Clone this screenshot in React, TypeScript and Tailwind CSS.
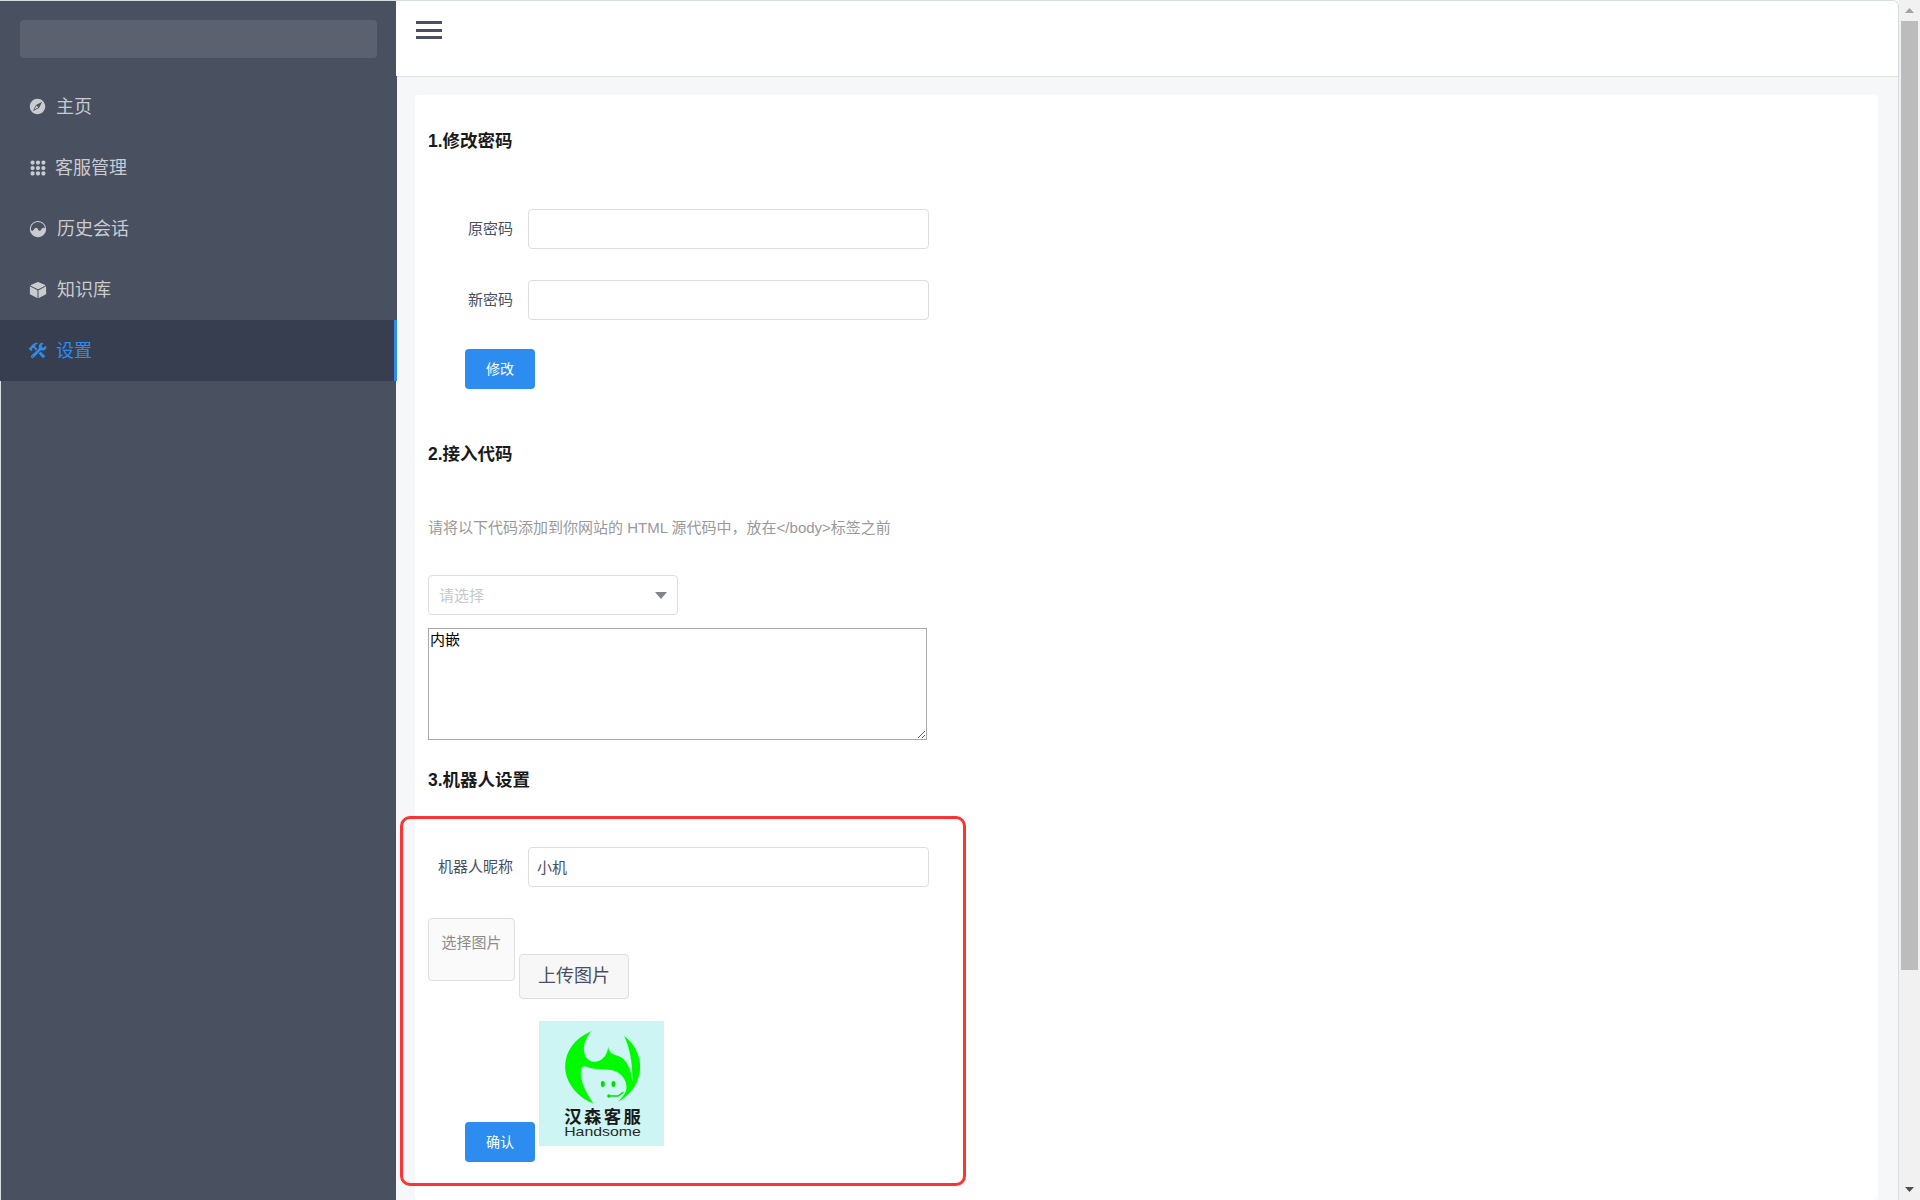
import { IoIosCompass, IoIosKeypad, IoIosAnalytics, IoIosCube, IoIosConstruct } from "react-icons/io";

const menu = [
  { label: "主页", Icon: IoIosCompass, size: "text-[19px]", gap: "ml-[10px]" },
  { label: "客服管理", Icon: IoIosKeypad, size: "text-[20px]", gap: "ml-[9px]" },
  { label: "历史会话", Icon: IoIosAnalytics, size: "text-[20px]", gap: "ml-[11px]" },
  { label: "知识库", Icon: IoIosCube, size: "text-[20px]", gap: "ml-[11px]" },
  { label: "设置", Icon: IoIosConstruct, size: "text-[19px]", gap: "ml-[10px]", active: true },
];

function Field({ label, value, className }: { label: string; value?: string; className?: string }) {
  return (
    <div className={`flex items-center ${className ?? ""}`}>
      <label className="w-[100px] pr-[15px] text-right text-[15px] text-[#495060]">{label}</label>
      <input
        readOnly
        value={value ?? ""}
        className="h-[40px] w-[401px] rounded-[4px] border border-[#dddee1] bg-white px-[8px] pb-[2px] text-[15px] text-[#495060] outline-none"
      />
    </div>
  );
}

function PrimaryButton({ children, className }: { children: string; className?: string }) {
  return (
    <button className={`flex h-[40px] w-[70px] shrink-0 items-center justify-center rounded-[4px] bg-[#2d8cf0] text-[14px] text-white ${className ?? ""}`}>
      {children}
    </button>
  );
}

function Heading({ children, className }: { children: string; className?: string }) {
  return <h2 className={`h-[24px] text-[17.5px] leading-[24px] font-bold text-[#1a1a1a] ${className ?? ""}`}>{children}</h2>;
}

function Logo() {
  return (
    <svg viewBox="27 33 370 375" className="mb-[16px] block h-[125px] w-[125px] shrink-0 bg-[#ccf5f3]">
      <path
        fill="#00fa00"
        d="M183 63 C130 85 103 125 103 170 C103 220 145 265 187 280 C165 245 148 215 150 185 C150 172 155 165 168 170 C195 183 230 172 258 185 C278 197 288 215 287 235 C285 250 275 262 262 275 C300 255 328 215 328 170 C328 135 310 100 280 78 C295 110 305 150 305 215 C300 170 285 145 260 137 C245 132 235 130 232 110 C230 130 220 150 195 155 C170 158 155 135 160 105 C165 85 175 70 183 63 Z"
      />
      <ellipse cx="216" cy="222" rx="6" ry="9" fill="#00e000" />
      <ellipse cx="248" cy="222" rx="6" ry="9" fill="#00e000" />
      <circle cx="234" cy="258" r="5" fill="#00e000" />
      <path d="M234 258 H262 L278 246" stroke="#00e000" strokeWidth="4" fill="none" />
      <text x="215" y="340" textAnchor="middle" textLength="230" className="fill-[#1a1a1a] text-[52px] font-bold">
        汉森客服
      </text>
      <text x="215" y="378" textAnchor="middle" textLength="230" lengthAdjust="spacingAndGlyphs" className="fill-[#2a2a2a] text-[38px]">
        Handsome
      </text>
    </svg>
  );
}

export default function App() {
  return (
    <div className="relative flex h-[1200px] w-[1920px] overflow-hidden bg-white font-['Liberation_Sans','Noto_Sans_CJK_SC',sans-serif]">
      <div className="flex min-w-0 flex-1 rounded-tr-[6px] border-t border-r border-[#d7dde4] bg-[#f5f7f9]">
        {/* Sidebar */}
        <aside className="relative z-10 flex w-[396px] shrink-0 flex-col bg-[#d7dde4]">
          <div className="w-[396px] bg-[#495060] px-[20px] pt-[19px] pb-[18px]">
            <div className="h-[38px] w-[357px] rounded-[4px] bg-[#5b616f]" />
          </div>
          <nav className="w-[397px] bg-[#495060]">
            {menu.map(({ label, Icon, size, gap, active }) => (
              <div
                key={label}
                className={`flex h-[61px] items-center pl-[29px] text-[18px] ${active ? "border-r-[3px] border-[#2d8cf0] bg-[#363e4f] text-[#2d8cf0]" : "text-[#c9cbcf]"}`}
              >
                <span className={`flex w-[17px] items-center justify-center ${size}`}>
                  <Icon className="shrink-0" />
                </span>
                <span className={`${gap} pt-[2px]`}>{label}</span>
              </div>
            ))}
          </nav>
          <div className="ml-[1px] flex-1 bg-[#495060]" />
        </aside>

        {/* Main */}
        <div className="flex min-w-0 flex-1 flex-col">
          <header className="h-[75px] shrink-0 rounded-tr-[6px] bg-white pt-[20px] pl-[20px] shadow-[0_1px_1px_rgba(0,0,0,0.1)]">
            <div className="flex h-[18px] w-[26px] flex-col justify-between">
              <div className="h-[3px] bg-[#495060]" />
              <div className="h-[3px] bg-[#495060]" />
              <div className="h-[3px] bg-[#495060]" />
            </div>
          </header>
          <main className="min-h-0 flex-1 pt-[19px] pr-[20px] pl-[19px]">
            <section className="h-full rounded-[4px] bg-white pt-[34px] pl-[13px]">
              <Heading>1.修改密码</Heading>
              <Field label="原密码" className="mt-[56px]" />
              <Field label="新密码" className="mt-[31px]" />
              <PrimaryButton className="mt-[29px] ml-[37px]">修改</PrimaryButton>

              <Heading className="mt-[53px]">2.接入代码</Heading>
              <p className="mt-[52px] h-[20px] text-[15px] leading-[20px] text-[#999999]">
                请将以下代码添加到你网站的 HTML 源代码中，放在&lt;/body&gt;标签之前
              </p>
              <div className="mt-[37px] flex h-[40px] w-[250px] items-center justify-between rounded-[4px] border border-[#dddee1] pr-[10px] pl-[10px] text-[15px] text-[#c5c8ce]">
                <span className="pt-[2px]">请选择</span>
                <svg viewBox="0 0 12 7" className="h-[7px] w-[12px]">
                  <path d="M0 0H12L6 7Z" fill="#80848f" />
                </svg>
              </div>
              <textarea
                readOnly
                defaultValue="内嵌"
                className="mt-[13px] block h-[112px] w-[499px] resize border border-[#a9a9a9] px-[1px] pt-[2px] text-[15px] leading-[18px] text-black outline-none"
              />

              <Heading className="mt-[28px]">3.机器人设置</Heading>
              <Field label="机器人昵称" value="小机" className="mt-[55px]" />
              <div className="mt-[31px] flex items-start">
                <div className="h-[63px] w-[87px] rounded-[4px] border border-[#dddee1] bg-[#fafafa] pt-[14px] text-center text-[15px] leading-[20px] text-[#8c8c8c]">
                  选择图片
                </div>
                <button className="mt-[36px] ml-[4px] h-[45px] w-[110px] rounded-[4px] border border-[#dddee1] bg-[#f7f7f7] text-[18px] text-[#495060]">
                  上传图片
                </button>
              </div>
              <div className="mt-[22px] ml-[37px] flex items-end gap-[4px]">
                <PrimaryButton>确认</PrimaryButton>
                <Logo />
              </div>
            </section>
          </main>
        </div>
      </div>

      {/* Scrollbar */}
      <div className="flex w-[21px] shrink-0 flex-col items-center bg-[#f1f1f1] pr-[1px] pl-[1px]">
        <div className="flex h-[21px] w-full items-center justify-center">
          <svg viewBox="0 0 9 5" className="h-[5px] w-[9px]"><path d="M0 5H9L4.5 0Z" fill="#a3a3a3" /></svg>
        </div>
        <div className="h-[949px] w-[17px] bg-[#bcbcbc]" />
        <div className="mt-auto flex h-[21px] w-full items-center justify-center">
          <svg viewBox="0 0 9 5" className="h-[5px] w-[9px]"><path d="M0 0H9L4.5 5Z" fill="#505050" /></svg>
        </div>
      </div>

      {/* Annotation */}
      <div className="pointer-events-none absolute top-[816px] left-[400px] z-20 h-[370px] w-[566px] rounded-[10px] border-[3px] border-[#ff3333]" />
    </div>
  );
}
